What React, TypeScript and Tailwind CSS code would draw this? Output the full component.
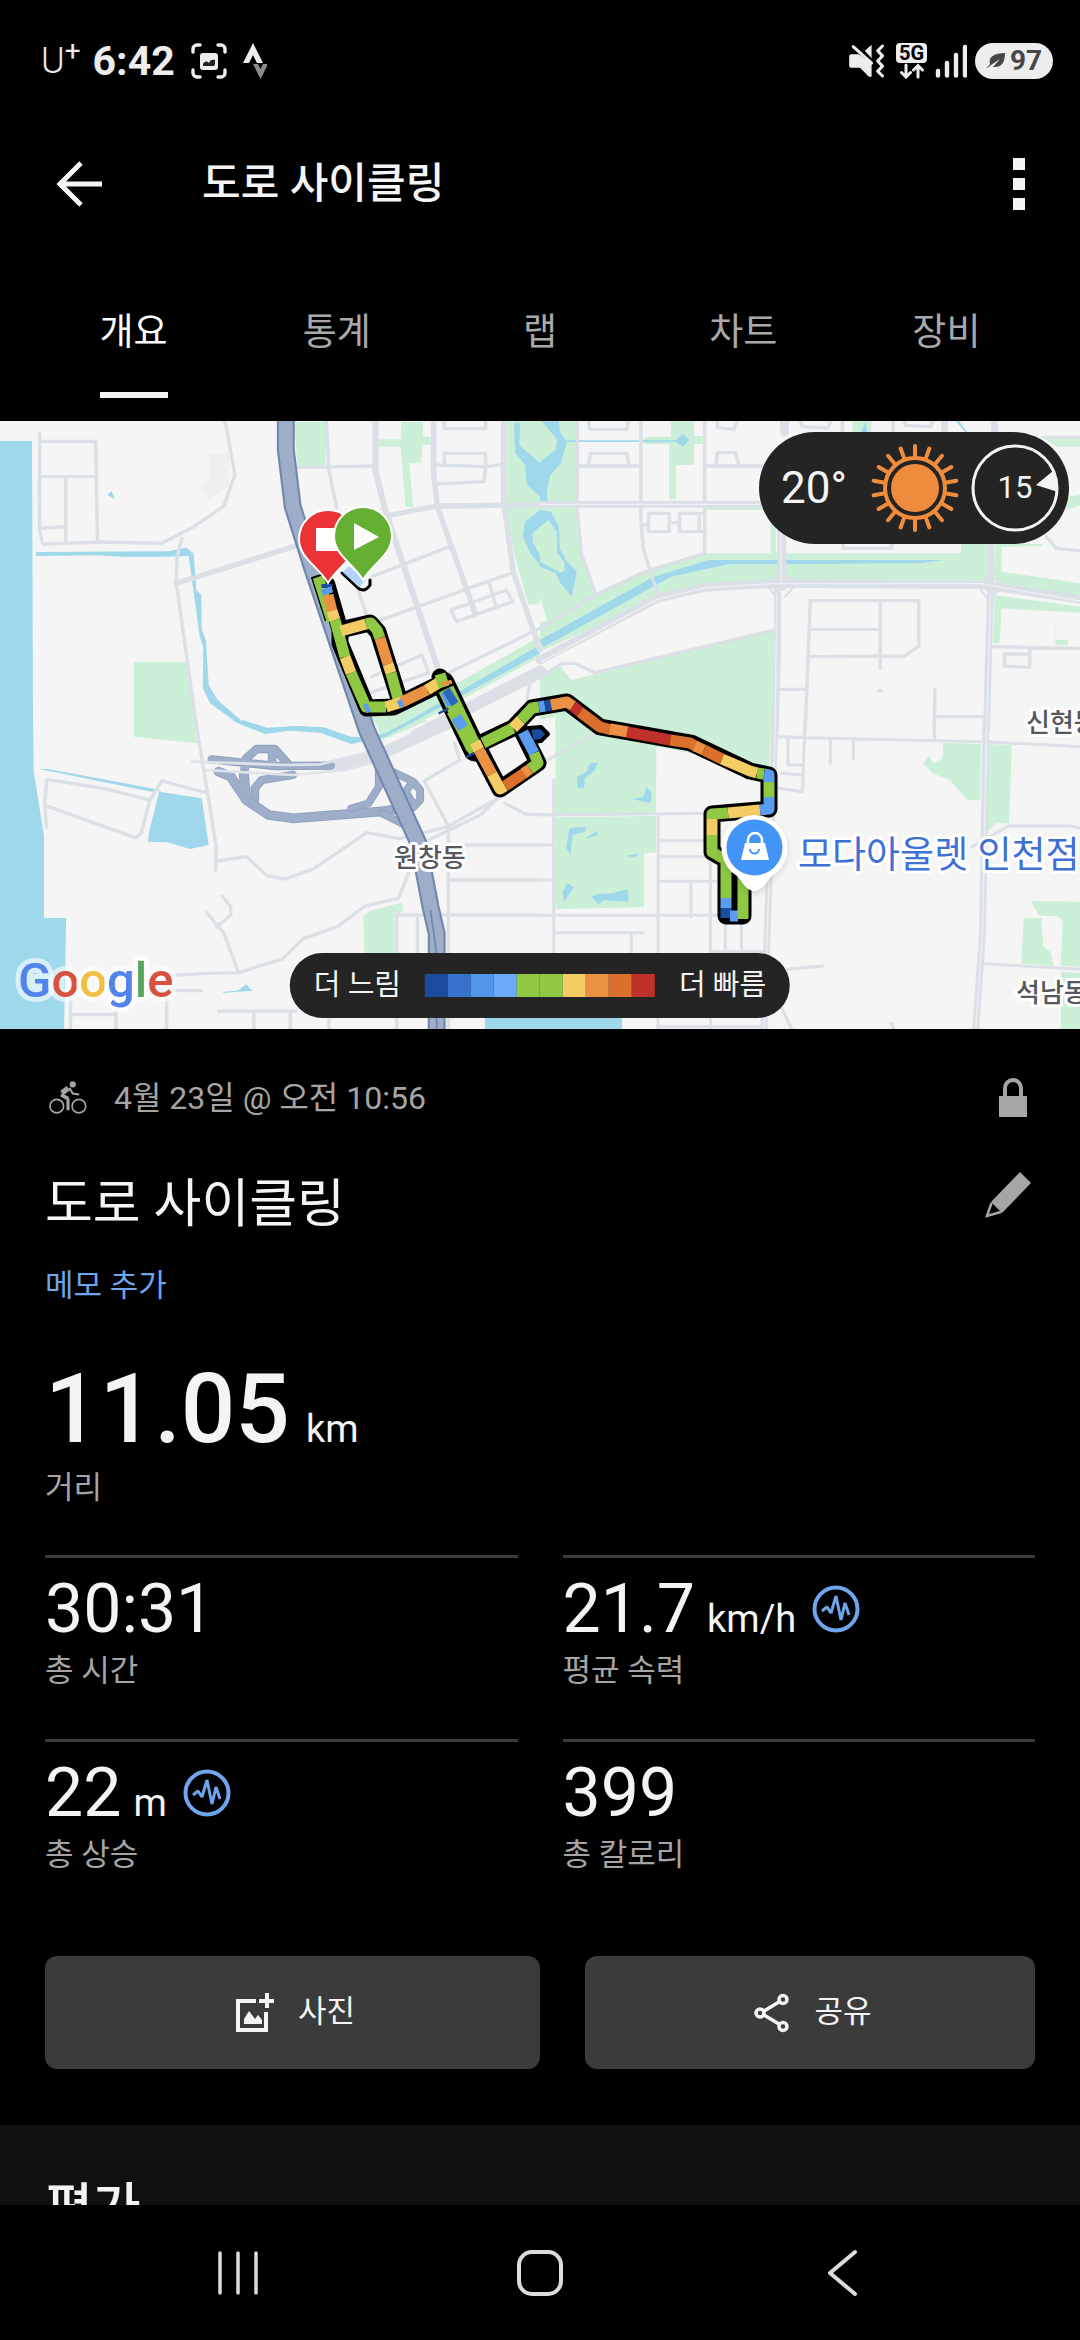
// App.tsx - Activity detail screen (overview tab) with route map
import { useState } from "react";

const tabs = ["개요", "통계", "랩", "차트", "장비"];

const legendColors = [
  "bg-[#1b4b9c]",
  "bg-[#3672c9]",
  "bg-[#5196ea]",
  "bg-[#6caaf8]",
  "bg-[#8fc843]",
  "bg-[#8fc843]",
  "bg-[#f3cd63]",
  "bg-[#ea9144]",
  "bg-[#db702c]",
  "bg-[#c0312b]",
];

type Stat = {
  value: string;
  unit?: string;
  label: string;
  hasChart?: boolean;
};

const stats: Stat[] = [
  { value: "30:31", label: "총 시간" },
  { value: "21.7", unit: "km/h", label: "평균 속력", hasChart: true },
  { value: "22", unit: "m", label: "총 상승", hasChart: true },
  { value: "399", label: "총 칼로리" },
];

type Tile = {
  x: number;
  y: number;
  parks: string;
  water: string;
  roads: [number, string][];
};

// Base map, four tiles on a 3136 x 1824 grid
const tiles: Tile[] = [
  {
    x: 0,
    y: -33,
    parks:
      "M855,36H948L945,165L863,170ZM1165,36H1228V80H1250V104H1226L1224,158H1188L1200,290H1178L1163,110H1098V88H1165ZM1470,33H1568V580L1535,585L1495,440L1470,300ZM389,756H540L570,960H389ZM1080,920L1240,870L1568,680V740L1180,960H1100Z",
    water:
      "M0,93H93L96,960H0ZM105,426L490,424L540,413L562,430L570,540L584,555L586,660L598,690L606,825L632,870L705,935L775,957L690,940L610,880L589,835L590,710L580,680L548,438L470,440H360L280,436L105,438ZM690,940L705,930L775,953L860,948L950,955V960H740ZM1140,960L1568,705V730L1210,930L1150,965ZM1492,38H1510L1508,105L1568,160V260L1530,225L1525,165L1497,130ZM1568,300L1525,335L1518,380L1540,430L1568,465V435L1548,400L1546,370L1568,350ZM312,255L324,243L333,268Z",
    roads: [
      [
        10,
        "M115,70V360L124,402L300,396L470,400L560,352L650,288L682,195L656,45L650,33M118,94H278L283,398M115,200H283M191,202V400M115,355L193,350M528,385L514,440L512,520L572,960M863,172L1085,168M948,36L955,180L978,295M1262,165L1410,170L1465,163M1290,36V56H1410V36M1290,160V130H1410V165M1262,222L1405,215L1410,170M1040,540L1075,650M1080,500L1305,410M1100,632L1490,487M1310,600L1470,540L1488,575L1325,635ZM1365,570L1378,620M1420,515L1440,590M1280,800L1568,655M1080,800L1225,735L1245,790M1070,850L1240,790M1530,870L1538,820L1568,800",
      ],
      [16, "M512,520L858,408M1259,33V190L1270,290L1380,610M1120,318L1270,288L1568,285M1462,33V270L1490,485L1568,720"],
      [18, "M1090,33V180L1118,300L1270,770"],
      [36, "M1210,975L1568,785"],
    ],
  },
  {
    x: 1568,
    y: -33,
    parks:
      "M0,33H108V300L120,430L162,555L30,630H20L0,560ZM380,33H447V78H480V102H447V165H395V268H375V102H302V80H380ZM480,288H670V300H480ZM0,640L290,490L480,430H670V300H685V430H1222V402H1300V510L700,515L480,530L330,570L0,725ZM1320,402H1460V408L1340,410V485L1568,520V560L1340,520L1318,510ZM1320,555L1568,590V608L1340,595L1335,700H1315ZM1460,82H1568V110H1500ZM0,800L60,770L90,810L685,660L675,960H45V920L0,930ZM908,33H962V70H908ZM1495,610L1497,705H1530L1535,690H1498ZM1530,260L1568,255V285L1530,300Z",
    water:
      "M5,33H55L58,65L78,95L60,160L30,195L20,240L22,285L0,290V155L45,120L50,90ZM0,300L32,305L55,350L58,415L75,450L107,485L92,560L60,520L45,490L0,470V455L60,488L72,480L70,455L50,430L48,365L25,330L0,350ZM0,690L330,500L490,450H1172L1100,460L545,463L380,500L10,712ZM78,91H395L415,72L433,90L415,110L395,96H78ZM932,66L945,38L950,66ZM1207,33H1217L1240,66H1235Z",
    roads: [
      [
        10,
        "M0,655L162,555L300,487L478,430V33M108,33V300L120,430L162,555M293,33V330L300,415L340,550M140,33L145,58H253L255,33M140,165L147,130H253L258,165M108,168H295M515,33V52L562,58L573,33M511,165L515,128H568L577,165M483,168H650M755,33L762,50L835,54L845,33M878,33V66M1025,33V66M1060,33V46L1135,50L1140,33M880,400V415H1022V400M315,310H375V365H315ZM405,310H462V365H405ZM375,338H405M293,345H315M462,310H480M462,365H480M785,572H1100V708L1060,738L780,740M785,572L770,960M785,658H990M988,572V775M683,838H770M1147,840L1145,960M1150,920H1295M1310,710L1568,715M1350,732H1422V772L1348,768ZM1422,732V715M0,800L65,760H100L160,788L690,658M1470,380L1500,415L1568,422M1460,82H1568M984,842H990",
      ],
      [6, "M1308,490L1340,530L1303,572L1275,532ZM700,485L745,520L712,560M700,485L655,520L685,560"],
      [20, "M0,283H640M1175,33V66M1320,33V66M690,520V730L683,960M1308,402V560L1303,700L1297,960"],
      [26, "M0,750L340,565L480,532L680,520L1280,524L1568,568M710,33V66M702,340V530"],
    ],
  },
  {
    x: 0,
    y: 897,
    parks: "M389,0H565L572,70L389,50ZM1095,0H1245L1110,60L1100,30ZM1055,590L1075,572L1170,547L1168,575L1145,590V700H1058Z",
    water:
      "M0,0H96L98,155L128,350V594H192L186,928H0ZM670,0L775,28L860,18L940,22L1020,50L1060,52L1120,40L1190,0H1210L1120,50L1020,72L930,38L840,32L770,42ZM462,215L586,235L606,375L552,387L485,367L430,365L432,340ZM113,147H140L470,211L440,215ZM648,815L690,812L715,793L732,812L648,819ZM1408,894H1568V930H1408Z",
    roads: [
      [
        10,
        "M135,322L130,250L136,178L300,205L435,240L470,183L598,218M130,256L393,353L410,340L435,240M568,0L628,380L626,450M630,423L716,410L775,467L828,477L910,447L1065,338L1160,356L1300,320L1445,235M1190,450L1157,535L1060,558L980,620L880,656L822,716L693,758L600,760L500,766M645,528L670,560V585L630,620M600,578L650,640L693,758M635,873H860M737,875V930M843,875V930M955,894V930M1152,894V930M484,815V930M205,830V930M337,870V930M205,884H337M430,812H585M1302,318V930M1302,318L1232,183L1335,120L1320,70M1245,360L1395,285L1445,235M1345,375H1568M1300,480H1568M1150,585H1568M1152,585V700M1212,585V700M1465,250L1528,283H1568",
      ],
      [36, "M960,140L1110,100L1320,0"],
    ],
  },
  {
    x: 1568,
    y: 897,
    parks:
      "M45,0H672L665,145L338,80L337,278L45,280ZM45,292L337,288V398H302V562L45,567ZM1170,68L1280,72L1278,240H1240L1190,180L1140,160L1112,130L1128,108L1142,130L1170,115ZM1300,72L1370,75L1362,310L1325,310L1295,340ZM1425,543L1568,545V740L1512,738L1518,600L1500,588L1450,587ZM1405,594H1455L1462,680L1482,695L1492,738L1397,730ZM1512,755L1568,760V928H1512Z",
    water:
      "M145,130L168,128L160,150L130,175L128,205H108V170L135,155ZM268,238L300,230L310,200L325,222L320,248ZM85,325L132,320L130,335L95,345L88,405L76,385ZM130,358L165,332L168,345ZM248,408L288,400L275,412ZM65,515L80,490L98,502L70,545ZM150,530L165,523L210,520L255,507L257,545L185,540L170,553ZM0,894H238V930H0Z",
    roads: [
      [
        9,
        "M0,285L500,280M40,180V700M343,285V930M345,362H500M345,410H480M345,484H510M438,484V590M0,375H40M0,480H40M0,586H520M40,638H300M265,638V700M495,430V930M538,610V690M585,610V690M495,695H660M25,118L165,40M690,50L960,58L1290,65L1568,80M770,0L762,215L695,205M720,55V135H765M700,160L760,165M843,55V130M910,55V115M1145,0V55M1255,380L1360,318H1540L1568,325M1275,730L1568,748M720,748L820,738M700,860L730,925M1020,910L1028,928M343,920H660",
      ],
      [20, "M683,0L665,480L650,930M1295,0L1285,640L1265,930"],
    ],
  },
];

const interchange: [number, string][] = [
  [20, "M615,1015L800,1035L960,1034M710,1087V1047L715,1012L745,984H798L835,1027M790,984V1027M740,1137V1102L760,1077L850,1062"],
  [24, "M635,1052L670,1067L715,1137L780,1182L850,1192L1100,1172L1170,1162M715,1137L708,1060"],
  [18, "M1100,1027V1097L1070,1147L1020,1162M1140,1052L1200,1082L1220,1107V1137L1200,1159L1150,1167M1195,1087L1178,1112L1200,1150M1110,1177L1175,1212"],
];

const highway = "M830,0V87L850,257L905,437L1065,927L1215,1267L1250,1457L1268,1537V1824";

const BLUE = "#1b4b9c";
const SKY = "#5a9df0";
const GREEN = "#8fc843";
const YELLOW = "#f3cd63";
const ORANGE = "#ea9144";
const RUST = "#db702c";
const RED = "#c0312b";

const routePath =
  "M327,164L340,209L340,222L367,287L393,286L440,263M340,209L370,202L378,211L400,281M440,256L474,331M477,324L500,368L538,342L523,312M477,324L513,307L532,287L567,281L600,306L691,322L750,350L769,354V388L712,393V431L726,439V495H743V440";

// Speed coloured pieces of the track, in drawing order
const routePieces: [string, string][] = [
  [GREEN, "M318,156L332,200"],
  [BLUE, "M327,163V167"],
  [SKY, "M326,167L328,173"],
  [ORANGE, "M328,174L332,190"],
  [YELLOW, "M332,190L335,199"],
  [GREEN, "M335,199L345,236"],
  [YELLOW, "M345,236L351,252"],
  [GREEN, "M351,252L366,286L386,286"],
  [YELLOW, "M341,210L366,203"],
  [GREEN, "M366,203L371,202L377,209L380,217"],
  [ORANGE, "M380,217L388,243"],
  [YELLOW, "M388,243L391,252"],
  [GREEN, "M391,252L399,281"],
  [YELLOW, "M386,286L402,281"],
  [ORANGE, "M402,281L427,269"],
  [YELLOW, "M427,269L440,261"],
  [GREEN, "M440,253L444,266"],
  [ORANGE, "M446,260L447,264"],
  [GREEN, "M452,290L474,331"],
  [SKY, "M446,270L452,284M456,296L463,307"],
  [BLUE, "M443,289L444,291M470,333L471,335"],
  [YELLOW, "M475,321L479,329"],
  [ORANGE, "M479,329L492,353"],
  [YELLOW, "M492,353L500,368L505,365"],
  [RUST, "M505,365L526,351"],
  [ORANGE, "M524,352L530,348"],
  [GREEN, "M530,348L538,342L534,332"],
  [SKY, "M534,332L523,311"],
  [GREEN, "M483,322L513,307"],
  [YELLOW, "M513,307L521,299"],
  [GREEN, "M521,299L532,287L539,286"],
  [SKY, "M539,286L545,285"],
  [BLUE, "M545,285L551,284"],
  [ORANGE, "M551,284L567,281L573,285"],
  [RED, "M573,285L580,291"],
  [RUST, "M580,291L600,306L612,309"],
  [ORANGE, "M610,308L628,311"],
  [RED, "M627,311L670,319"],
  [RUST, "M670,319L690,322L697,326"],
  [ORANGE, "M695,325L704,329"],
  [RUST, "M704,329L722,338"],
  [YELLOW, "M722,338L750,350L757,352"],
  [GREEN, "M757,352L764,353"],
  [SKY, "M764,353L769,354V361"],
  [GREEN, "M769,361V376"],
  [SKY, "M769,376V388L760,389"],
  [YELLOW, "M760,389L728,392"],
  [GREEN, "M728,392L712,393V398"],
  [YELLOW, "M712,398V414"],
  [GREEN, "M712,414V431L726,439V477"],
  [SKY, "M726,477V487"],
  [BLUE, "M726,487V497"],
  [SKY, "M730,495H738"],
  [GREEN, "M743,498V440"],
];

const StatusBar = () => (
  <div className="flex h-[122px] shrink-0 items-center justify-between pl-[41px] pr-[27px] text-[#ededed]">
    <div className="flex items-center gap-4">
      <div className="flex items-center gap-3">
        <span className="flex text-[36px] font-light leading-10">
          U<span className="text-[28px] font-normal leading-5">+</span>
        </span>
        <span className="text-[41px] font-bold leading-10">6:42</span>
      </div>
      <svg className="h-9 w-9" viewBox="0 0 36 36" fill="none" stroke="currentColor" strokeWidth="3.4" strokeLinecap="round">
        <path d="M2 9V6a4 4 0 0 1 4-4h3M27 2h3a4 4 0 0 1 4 4v3M34 27v3a4 4 0 0 1-4 4h-3M9 34H6a4 4 0 0 1-4-4v-3" />
        <rect x="9" y="10" width="18" height="17" rx="3" fill="currentColor" stroke="none" />
        <path d="M12 23v-2c2-3 4-3 6-1 1-3 3-4 6-3v4l-1 2Z" fill="#222" stroke="none" />
      </svg>
      <svg className="h-9 w-6" viewBox="0 0 24 36">
        <path d="M0 20 10 0l10 20h-6l-4-8-4 8Z" fill="currentColor" />
        <path d="M10 21h5l2.500 5 2.500-5h5l-7.500 15Z" fill="#8a8a8a" />
      </svg>
    </div>
    <div className="flex items-center gap-2">
      <svg className="mr-1 h-[34px] w-[35px]" viewBox="0 0 102 100" fill="currentColor">
        <path d="M6 30H28L66 56V96H58L32 70H6Q0 70 0 64V36Q0 30 6 30ZM46 20 66 2V42Z" />
        <path d="M12 8 66 56" stroke="currentColor" strokeWidth="9" strokeLinecap="round" />
        <path d="m98 6-14 14 14 15-14 15 14 15-14 15 14 14" fill="none" stroke="currentColor" strokeWidth="9" strokeLinecap="round" strokeLinejoin="round" />
      </svg>
      <div className="flex w-[31px] flex-col items-center">
        <span className="w-full rounded-sm bg-[#ededed] text-center text-[20px] font-bold leading-5 text-black">5G</span>
        <svg className="h-4 w-6" viewBox="0 0 24 16" fill="none" stroke="currentColor" strokeWidth="3" strokeLinecap="round">
          <path d="M6 2v12M1.500 9.500 6 14l4.500-4.500M18 14V3M13.500 7 18 2.500 22.500 7" />
        </svg>
      </div>
      <svg className="h-[34px] w-8" viewBox="0 0 32 34" stroke="currentColor" strokeWidth="4.400" strokeLinecap="round">
        <path d="M3 27v4.500M12 19v12.500M21 11v20.500M30 3v28.500" />
      </svg>
      <div className="flex h-9 w-[78px] items-center justify-center gap-1 rounded-full bg-[#ededed] text-[#47474a]">
        <svg className="h-4 w-5" viewBox="0 0 20 16" fill="currentColor">
          <path d="M4 11C2 4 8 0 19 0c0 9-3 15-12 14L14 6 5 12c-2 2-3 3-5 2 2 0 3-1 4-3Z" />
        </svg>
        <span className="text-[28px] font-bold leading-9">97</span>
      </div>
    </div>
  </div>
);

const RouteMap = () => (
  <svg className="block w-full" viewBox="0 0 1080 608" role="img" aria-label="경로 지도">
    <rect width="1080" height="608" fill="#f5f5f5" />
    <g transform="scale(.34439 .33333)" strokeLinejoin="round" fill="none">
      <path d="M608,99H665V197L605,235L580,195L608,172Z" fill="#efefef" />
      {tiles.map((tile) => (
        <g key={`land-${tile.x}-${tile.y}`} transform={`translate(${tile.x} ${tile.y})`}>
          <path d={tile.parks} fill="#ccefd8" />
          <path d={tile.water} fill="#9fd8ea" />
        </g>
      ))}
      {tiles.map((tile) => (
        <g key={`road-${tile.x}-${tile.y}`} transform={`translate(${tile.x} ${tile.y})`} stroke="#dae0e6" strokeLinecap="round">
          {tile.roads.map(([width, d]) => (
            <path key={width} d={d} strokeWidth={width} />
          ))}
        </g>
      ))}
      {interchange.map(([width, d]) => (
        <g key={width} strokeLinecap="round">
          <path d={d} stroke="#8d9fbe" strokeWidth={width + 5} />
          <path d={d} stroke="#9eaec8" strokeWidth={width} />
        </g>
      ))}
      <path d="M555,1022L830,1032L930,1030L1110,985M595,1047L850,1062L1000,1047L1110,1017" stroke="#dde3e9" strokeWidth="8" />
      <path d={highway} stroke="#7186ad" strokeWidth="52" />
      <path d={highway} stroke="#9eaec8" strokeWidth="40" />
      <path d="M1250,1467L1268,1600V1824" stroke="#7186ad" strokeWidth="5" />
      {/* Double carriageways */}
      <path
        d="M1568,250H2208M2255,520L2251,927L2233,1377L2218,1824M2876,520L2865,927L2853,1537L2833,1824M2268,310V490M1568,725L1908,535L2048,500L2248,488H2848L3136,540"
        stroke="#eceff3"
        strokeWidth="4"
      />
    </g>

    <g className="text-[26px] font-medium" fill="#55585c" stroke="#fff" strokeWidth="6" strokeLinejoin="round" style={{ paintOrder: "stroke" }}>
      <text x="394" y="446">원창동</text>
      <text x="1026" y="311">신현동</text>
      <text x="1016" y="581">석남동</text>
      <text x="798" y="447" className="text-[37px] font-normal" fill="#3f70d6">
        모다아울렛 인천점
      </text>
    </g>

    <g fill="none" strokeLinejoin="round">
      <path d="M342,152L358,167Q365,172 370,164V159" stroke="#000" strokeWidth="3" strokeLinecap="round" />
      <path d="M346,148L362,163" stroke="#b5d3fb" strokeWidth="9" />
      <path d="M318,154L332,198" stroke="#000" strokeWidth="15" />
      <path d={routePath} stroke="#000" strokeWidth="17" strokeLinecap="round" />
      <path d="M443,262L475,329" stroke="#000" strokeWidth="23" strokeLinecap="round" />
      <path d="M529,307L541,306L548,313L541,320L532,321Z" fill={BLUE} stroke="#000" strokeWidth="4" />
      <path d="M446,268L474,327" stroke={GREEN} strokeWidth="16" />
      {routePieces.map(([color, d]) => (
        <path key={d} d={d} stroke={color} strokeWidth="11" />
      ))}
      <path d="M365,283L369,291M399,279L402,286" stroke={SKY} strokeWidth="5" />
      <path d="M446,269L455,283" stroke="#2c67bd" strokeWidth="8" />
    </g>

    {/* Finish and start pins */}
    <path d="M328 162C318 145 299 137 299 118a29 29 0 0 1 58 0C357 137 338 145 328 162Z" fill="#ea3237" stroke="#fff" strokeWidth="2" />
    <rect x="316" y="107" width="24" height="23" fill="#fff" />
    <path d="M363 159C353 142 334 134 334 115a29 29 0 0 1 58 0C392 134 373 142 363 159Z" fill="#65b033" stroke="#fff" strokeWidth="2" />
    <path d="M354 102V129L379 116Z" fill="#fff" />

    {/* Shop pin */}
    <path d="M754 470c-8 0-11-9-17-15a33 33 0 1 1 35 0c-6 6-10 15-18 15Z" fill="#fff" className="drop-shadow-md" />
    <circle cx="754.500" cy="426.500" r="28" fill="#4394f7" />
    <path d="m741 439 4-17h20l4 17Z" fill="#fff" />
    <path d="M748 422v-3a7 7 0 0 1 14 0v3" fill="none" stroke="#fff" strokeWidth="2.500" />
    <path d="M750 428a4.500 4.500 0 0 0 9 0" fill="none" stroke="#4394f7" strokeWidth="2" />

    <text x="18" y="576" className="text-[49px] font-medium" strokeWidth="10" strokeLinejoin="round" stroke="#fff" strokeOpacity=".6" style={{ paintOrder: "stroke" }}>
      <tspan fill="#5384ec">G</tspan>
      <tspan fill="#d85140">o</tspan>
      <tspan fill="#f1bf42">o</tspan>
      <tspan fill="#5384ec">g</tspan>
      <tspan fill="#58a55c">l</tspan>
      <tspan fill="#d85140">e</tspan>
    </text>
  </svg>
);

const Weather = () => (
  <div className="absolute right-[11px] top-[11px] flex h-28 w-[310px] items-center rounded-full bg-[#242424] pl-[22px] pr-2.5 text-[#f4f4f4]">
    <span className="text-[44px] leading-[48px]">20°</span>
    <svg className="ml-auto h-[88px] w-[88px]" viewBox="-44 -44 88 88" fill="none" stroke="#f08d3d" strokeWidth="4" strokeLinecap="round">
      <circle r="24" fill="#f08d3d" stroke="none" />
      <circle r="30" />
      {Array.from({ length: 18 }, (_, i) => (
        <path key={i} d="M0-32V-42" transform={`rotate(${i * 20})`} />
      ))}
    </svg>
    <div className="relative ml-3 flex h-[88px] w-[88px] items-center justify-center">
      <svg className="absolute inset-0" viewBox="0 0 88 88">
        <circle cx="44" cy="44" r="42" fill="none" stroke="#f4f4f4" strokeWidth="3" />
        <path d="M65 41 82 27 87 48Z" fill="#f4f4f4" />
      </svg>
      <span className="text-[31px] leading-[48px]">15</span>
    </div>
  </div>
);

const SpeedLegend = () => (
  <div className="absolute bottom-[11px] left-1/2 flex h-[65px] -translate-x-1/2 items-center gap-6 whitespace-nowrap rounded-full bg-[#242424] px-6 text-[29px] text-[#f4f4f4]">
    <span>더 느림</span>
    <div className="flex">
      {legendColors.map((color, i) => (
        <span key={i} className={`h-[23px] w-[23px] ${color}`} />
      ))}
    </div>
    <span>더 빠름</span>
  </div>
);

const ChartBadge = () => (
  <button className="ml-4 self-center text-[#6ea5ec]" aria-label="차트 보기">
    <svg className="h-12 w-12" viewBox="0 0 48 48" fill="none" stroke="currentColor">
      <circle cx="24" cy="24" r="21.500" strokeWidth="4" />
      <path d="m10 26 5-4 4 6 5-17 5 24 4-17 4 12" strokeWidth="3" strokeLinejoin="bevel" />
    </svg>
  </button>
);

const App: React.FC = () => {
  const [activeTab, setActiveTab] = useState(tabs[0]);

  return (
    <div className="flex h-screen flex-col overflow-hidden bg-black font-['Roboto','Noto_Sans_CJK_KR',sans-serif] text-[#f4f4f4]">
      <StatusBar />

      {/* Header */}
      <header className="flex h-[124px] shrink-0 items-center pl-14 pr-[55px]">
        <button aria-label="뒤로">
          <svg className="h-12 w-12" viewBox="0 0 48 48" fill="none" stroke="currentColor" strokeWidth="5">
            <path d="M46 24H5M25 3 4 24l21 21" />
          </svg>
        </button>
        <h1 className="ml-[98px] flex-1 text-[42px] font-medium leading-[56px]">도로 사이클링</h1>
        <button className="flex flex-col gap-2" aria-label="더보기">
          <span className="h-3 w-3 bg-current" />
          <span className="h-3 w-3 bg-current" />
          <span className="h-3 w-3 bg-current" />
        </button>
      </header>

      {/* Tabs */}
      <nav className="grid h-[175px] shrink-0 grid-cols-5 justify-items-center px-8">
        {tabs.map((tab) => (
          <button
            key={tab}
            onClick={() => setActiveTab(tab)}
            className={`flex flex-col gap-[34px] pt-[62px] text-[37px] leading-[50px] ${
              tab === activeTab ? "text-white" : "text-[#a9a9a9]"
            }`}
          >
            {tab}
            {tab === activeTab && <span className="h-1.5 w-full bg-[#f4f4f4]" />}
          </button>
        ))}
      </nav>

      <main className="min-h-0 flex-1 overflow-y-auto [scrollbar-width:none]">
        <div className="relative">
          <RouteMap />
          <Weather />
          <SpeedLegend />
        </div>

        <section className="px-[45px] pb-14 pt-[43px]">
          <div className="flex h-[52px] items-center text-[32px] text-[#a5a5a5]">
            <svg className="ml-[3px] h-[34px] w-10" viewBox="0 0 112 100" fill="none" stroke="currentColor">
              <circle cx="23" cy="74" r="20" strokeWidth="5" />
              <circle cx="88" cy="74" r="20" strokeWidth="5" />
              <circle cx="70" cy="10" r="9" fill="currentColor" stroke="none" />
              <path d="M38 36 57 21" strokeWidth="16" />
              <path d="m60 20 10 17 19 3" strokeWidth="6" />
              <path d="m36 40 20 14v32" strokeWidth="9" />
              <path d="M36 42 56 50" strokeWidth="10" />
            </svg>
            <span className="ml-[26px] flex-1">4월 23일 @ 오전 10:56</span>
            <svg className="mr-2 h-10 w-7" viewBox="0 0 28 40" fill="currentColor">
              <path d="M0 18h28v21H0Z" />
              <path d="M6 19v-9a8 8 0 0 1 16 0v9" fill="none" stroke="currentColor" strokeWidth="4" />
            </svg>
          </div>

          <div className="mt-12 flex items-start justify-between">
            <h2 className="text-[52px] leading-[66px]">도로 사이클링</h2>
            <button className="mr-1 text-[#a5a5a5]" aria-label="편집">
              <svg className="h-[46px] w-[46px]" viewBox="0 0 46 46" fill="currentColor">
                <path d="M35 0 46 11 17 41 6 30Z" />
                <path d="M6.500 31 2 44l14-4" fill="none" stroke="currentColor" strokeWidth="2.500" />
              </svg>
            </button>
          </div>
          <button className="mt-7 block text-[31px] leading-10 text-[#6ea5ec]">메모 추가</button>

          <div className="mt-[55px] flex items-baseline gap-4 whitespace-nowrap">
            <span className="text-[96px] font-medium leading-[96px]">11.05</span>
            <span className="text-[38px] leading-10">km</span>
          </div>
          <p className="mt-[11px] text-[31px] leading-10 text-[#a5a5a5]">거리</p>

          <div className="mt-[47px] grid grid-cols-2 gap-x-[45px]">
            {stats.map((stat) => (
              <div key={stat.label} className="border-t-[3px] border-[#3b3b3b] pb-12 pt-[17px]">
                <div className="flex h-[68px] items-baseline">
                  <span className="text-[68px] leading-[68px]">{stat.value}</span>
                  {stat.unit && <span className="ml-3 text-[38px] leading-10">{stat.unit}</span>}
                  {stat.hasChart && <ChartBadge />}
                </div>
                <p className="mt-2 text-[31px] leading-10 text-[#a5a5a5]">{stat.label}</p>
              </div>
            ))}
          </div>

          {/* Actions */}
          <div className="mt-[33px] grid grid-cols-[11fr_10fr] gap-[45px] text-[31px]">
            <button className="flex h-[113px] items-center justify-center gap-6 rounded-xl bg-[#3b3b3b] pl-1.5">
              <svg className="h-10 w-[38px]" viewBox="0 0 38 40" fill="none" stroke="currentColor" strokeWidth="4">
                <path d="M20 8H2v29h28V19" />
                <path d="M31 0v15M23 8h15" />
                <path d="M8 31v-5l5-8 6 8 3-4 4 5v4Z" fill="currentColor" stroke="none" />
              </svg>
              사진
            </button>
            <button className="flex h-[113px] items-center justify-center gap-6 rounded-xl bg-[#3b3b3b] pl-1.5">
              <svg className="h-10 w-9" viewBox="0 0 36 40" fill="none" stroke="currentColor" strokeWidth="3.500">
                <circle cx="6" cy="20" r="4" />
                <circle cx="29" cy="6.500" r="4" />
                <circle cx="29" cy="33.500" r="4" />
                <path d="M10 18 25 9M10 22l15 9" />
              </svg>
              공유
            </button>
          </div>
        </section>

        <section className="bg-[#101010] px-[45px] pb-12 pt-[52px]">
          <h2 className="text-[52px] font-medium leading-[64px]">평가</h2>
        </section>
      </main>

      {/* System navigation */}
      <footer className="grid h-[135px] shrink-0 grid-cols-3 place-items-center px-[87px] text-[#dcdcdc]">
        <button aria-label="최근 앱">
          <svg className="h-12 w-12" viewBox="0 0 48 48" stroke="currentColor" strokeWidth="3.500" strokeLinecap="round">
            <path d="M6 4v40M24 4v40M42 4v40" />
          </svg>
        </button>
        <button aria-label="홈">
          <svg className="h-12 w-12" viewBox="0 0 48 48" fill="none" stroke="currentColor" strokeWidth="4">
            <rect x="3" y="3" width="42" height="42" rx="13" />
          </svg>
        </button>
        <button aria-label="뒤로 가기">
          <svg className="h-12 w-12" viewBox="0 0 48 48" fill="none" stroke="currentColor" strokeWidth="4" strokeLinecap="round" strokeLinejoin="round">
            <path d="M37 3 12 24l25 21" />
          </svg>
        </button>
      </footer>
    </div>
  );
};

export default App;
